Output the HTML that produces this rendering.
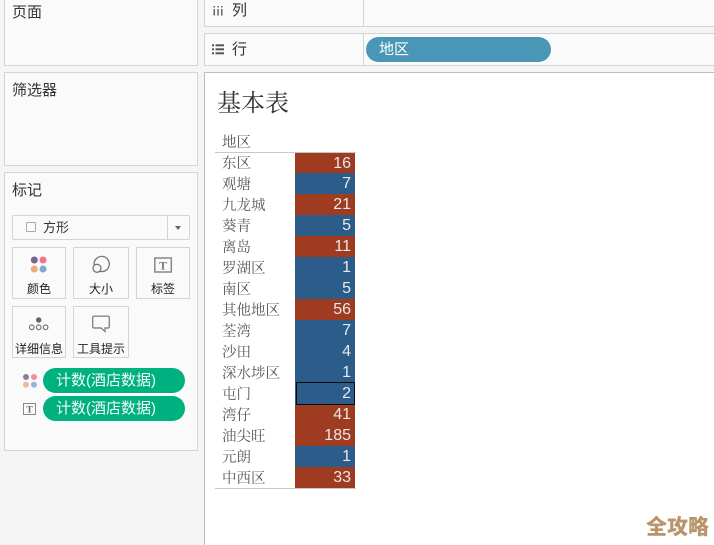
<!DOCTYPE html>
<html lang="zh"><head><meta charset="utf-8">
<style>
html,body{margin:0;padding:0}
html{width:714px;height:545px;overflow:hidden}
body{width:714px;height:545px;overflow:hidden;background:#f5f5f5;position:relative;font-family:"Liberation Sans","Noto Sans CJK SC",sans-serif;color:#333}
div{box-sizing:border-box}
.a{position:absolute}
.p{position:absolute;background:#fafafa;border:1px solid #d4d4d4}
.t{position:absolute;font-size:15px;line-height:20px;white-space:nowrap;color:#333}
.c{position:absolute;background:#fafafa;border:1px solid #d4d4d4;width:54px;height:52px}
.cl{position:absolute;font-size:12px;line-height:18px;white-space:nowrap;text-align:center;color:#222}
.pill{position:absolute;background:#00b180;border-radius:13px;left:43px;width:142px;height:25px;color:#f4fbf8;font-size:15px;line-height:25px;padding-left:13px;white-space:nowrap}
.l{position:absolute;left:222px;font-family:"Liberation Serif","Noto Serif CJK SC",serif;font-size:14.5px;line-height:21px;color:#5a5a5a;white-space:nowrap}
.v{position:absolute;left:295px;width:60px;height:21px;color:#e8e8e8;font-size:16px;line-height:21px;text-align:right;padding-right:4px}
.r{background:#9e3b20}.b{background:#2b5c8a}
</style></head><body>

<div class="p" style="left:4px;top:-2px;width:194px;height:68px"></div>
<div class="t" style="left:12px;top:3px">页面</div>
<div class="p" style="left:4px;top:72px;width:194px;height:94px"></div>
<div class="t" style="left:12px;top:81px">筛选器</div>
<div class="p" style="left:4px;top:172px;width:194px;height:279px"></div>
<div class="t" style="left:12px;top:181px">标记</div>

<div class="a" style="left:12px;top:215px;width:178px;height:25px;background:#fafafa;border:1px solid #d4d4d4;border-radius:2px"></div>
<div class="a" style="left:167px;top:216px;width:1px;height:23px;background:#d4d4d4"></div>
<div class="a" style="left:26px;top:222px;width:10px;height:10px;border:1px solid #aaa;background:#fafafa;border-radius:1px"></div>
<div class="a" style="left:43px;top:218px;font-size:13px;line-height:20px;color:#333">方形</div>
<div class="a" style="left:175px;top:226px;width:0;height:0;border-left:3.500px solid transparent;border-right:3.500px solid transparent;border-top:4px solid #666"></div>

<div class="c" style="left:12px;top:247px"></div>
<svg class="a" style="left:28px;top:254px" width="24" height="24"><circle cx="6.300" cy="6" r="3.500" fill="#7b6392"/><circle cx="15" cy="6" r="3.500" fill="#f4738c"/><circle cx="6.300" cy="15" r="3.500" fill="#f2a97e"/><circle cx="15" cy="15" r="3.500" fill="#80a8d2"/></svg>
<div class="cl" style="left:12px;top:280px;width:54px">颜色</div>

<div class="c" style="left:73px;top:247px;width:56px"></div>
<svg class="a" style="left:90px;top:254px" width="24" height="24" fill="none" stroke="#777" stroke-width="1.300"><circle cx="11.700" cy="10" r="7.600"/><circle cx="7" cy="14.300" r="4" fill="#fafafa"/></svg>
<div class="cl" style="left:73px;top:280px;width:56px">大小</div>

<div class="c" style="left:136px;top:247px"></div>
<svg class="a" style="left:153px;top:257px" width="20" height="18"><rect x="1.800" y="1" width="16.500" height="14" fill="none" stroke="#888" stroke-width="1.500"/><text x="10" y="12.500" font-family="Liberation Serif" font-size="11.500" font-weight="bold" fill="#777" text-anchor="middle">T</text></svg>
<div class="cl" style="left:136px;top:280px;width:54px">标签</div>

<div class="c" style="left:12px;top:306px;height:52px"></div>
<svg class="a" style="left:27px;top:315px" width="24" height="18" fill="none" stroke="#777" stroke-width="1.200"><circle cx="11.700" cy="5" r="2.700" fill="#666" stroke="none"/><circle cx="4.800" cy="12.300" r="2.300"/><circle cx="11.700" cy="12.300" r="2.300"/><circle cx="18.600" cy="12.300" r="2.300"/></svg>
<div class="cl" style="left:12px;top:340px;width:54px">详细信息</div>

<div class="c" style="left:73px;top:306px;width:56px;height:52px"></div>
<svg class="a" style="left:91px;top:314px" width="20" height="20" fill="none" stroke="#888" stroke-width="1.400"><path d="M3 2.200H17A1.500 1.500 0 0 1 18.300 3.700V12.500A1.500 1.500 0 0 1 17 14H14V17.500L10 14H3A1.500 1.500 0 0 1 1.700 12.500V3.700A1.500 1.500 0 0 1 3 2.200Z"/></svg>
<div class="cl" style="left:73px;top:340px;width:56px">工具提示</div>

<svg class="a" style="left:22px;top:373px" width="18" height="18"><circle cx="4" cy="4" r="3" fill="#8d7ba3"/><circle cx="12" cy="4" r="3" fill="#f38ea2"/><circle cx="4" cy="11.700" r="3" fill="#f3b594"/><circle cx="12" cy="11.700" r="3" fill="#97b6d8"/></svg>
<div class="pill" style="top:368px">计数(酒店数据)</div>
<svg class="a" style="left:23px;top:403px" width="14" height="13"><rect x=".5" y=".5" width="12" height="11" fill="none" stroke="#888"/><text x="6.500" y="9.500" font-family="Liberation Serif" font-size="9.500" font-weight="bold" fill="#666" text-anchor="middle">T</text></svg>
<div class="pill" style="top:396px">计数(酒店数据)</div>

<div class="p" style="left:204px;top:-2px;width:520px;height:29px"></div>
<div class="a" style="left:363px;top:0;width:1px;height:26px;background:#d4d4d4"></div>
<svg class="a" style="left:213px;top:5px" width="11" height="11" fill="#666"><rect x=".5" y="1" width="1.500" height="1.500"/><rect x=".5" y="4" width="1.500" height="6.500"/><rect x="4.300" y="1" width="1.500" height="1.500"/><rect x="4.300" y="4" width="1.500" height="6.500"/><rect x="8" y="1" width="1.500" height="1.500"/><rect x="8" y="4" width="1.500" height="6.500"/></svg>
<div class="t" style="left:232px;top:1px">列</div>

<div class="p" style="left:204px;top:33px;width:520px;height:33px"></div>
<div class="a" style="left:363px;top:34px;width:1px;height:31px;background:#d4d4d4"></div>
<svg class="a" style="left:212px;top:44px" width="13" height="11" fill="#555"><rect y=".3" width="2" height="2"/><rect x="3.500" y=".3" width="8.500" height="2"/><rect y="4.300" width="2" height="2"/><rect x="3.500" y="4.300" width="8.500" height="2"/><rect y="8.300" width="2" height="2"/><rect x="3.500" y="8.300" width="8.500" height="2"/></svg>
<div class="t" style="left:232px;top:40px">行</div>
<div class="a" style="left:366px;top:37px;width:185px;height:25px;border-radius:13px;background:#4a96b6;color:#fff;font-size:15px;line-height:25px;padding-left:13px">地区</div>

<div class="a" style="left:204px;top:72px;width:510px;height:473px;background:#fff;border-left:1px solid #bdbdbd;border-top:1px solid #bdbdbd"></div>
<div class="a" style="left:217px;top:88px;font-family:'Liberation Serif','Noto Serif CJK SC',serif;font-size:24px;line-height:32px;color:#333">基本表</div>

<div class="l" style="top:133px">地区</div>
<div class="a" style="left:215px;top:152px;width:141px;height:1px;background:#c8c8c8"></div>
<div class="a" style="left:215px;top:488px;width:141px;height:1px;background:#c8c8c8"></div>

<div class="l" style="top:154px">东区</div><div class="v r" style="top:153px;height:20px">16</div>
<div class="l" style="top:175px">观塘</div><div class="v b" style="top:173px">7</div>
<div class="l" style="top:196px">九龙城</div><div class="v r" style="top:194px">21</div>
<div class="l" style="top:217px">葵青</div><div class="v b" style="top:215px">5</div>
<div class="l" style="top:238px">离岛</div><div class="v r" style="top:236px">11</div>
<div class="l" style="top:259px">罗湖区</div><div class="v b" style="top:257px">1</div>
<div class="l" style="top:280px">南区</div><div class="v b" style="top:278px">5</div>
<div class="l" style="top:301px">其他地区</div><div class="v r" style="top:299px">56</div>
<div class="l" style="top:322px">荃湾</div><div class="v b" style="top:320px">7</div>
<div class="l" style="top:343px">沙田</div><div class="v b" style="top:341px">4</div>
<div class="l" style="top:364px">深水埗区</div><div class="v b" style="top:362px">1</div>
<div class="l" style="top:385px">屯门</div><div class="v b" style="top:382px;height:23px"></div><div class="a" style="left:296px;top:382px;width:59px;height:23px;border:1.300px solid #0a0a0a;color:#e8e8e8;font-size:16px;line-height:22px;text-align:right;padding-right:3px">2</div>
<div class="l" style="top:406px">湾仔</div><div class="v r" style="top:405px;height:20px;line-height:20px">41</div>
<div class="l" style="top:427px">油尖旺</div><div class="v r" style="top:425px">185</div>
<div class="l" style="top:448px">元朗</div><div class="v b" style="top:446px">1</div>
<div class="l" style="top:469px">中西区</div><div class="v r" style="top:467px">33</div>

<div class="a" style="left:646px;top:515px;font-family:'Liberation Sans','Noto Sans CJK SC',sans-serif;font-weight:900;font-size:21px;line-height:26px;color:#b8956c;white-space:nowrap">全攻略</div>
</body></html>
